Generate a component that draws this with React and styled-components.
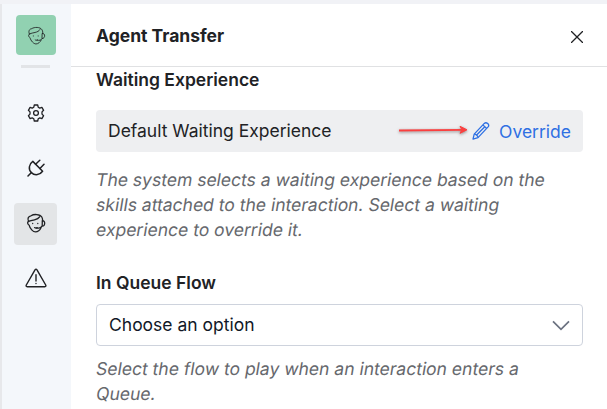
import React from "react";
import styled, { createGlobalStyle } from "styled-components";

const GlobalStyle = createGlobalStyle`
  * { box-sizing: border-box; }
  html, body { margin: 0; padding: 0; overflow: hidden; background: #fff; }
  body { font-family: Inter, "Liberation Sans", sans-serif; color: #212225; }
`;

const Screen = styled.div`
  width: 607px;
  height: 409px;
  overflow: hidden;
  display: flex;
  border-top: 4px solid #f1f2f6;
  background: #fff;
`;

const Rail = styled.nav`
  width: 71px;
  flex: none;
  display: flex;
  flex-direction: column;
  align-items: center;
  padding-top: 11px;
  border-left: 2px solid #e7e8eb;
  background: #f4f7fb;
`;

const Avatar = styled.div`
  width: 40px;
  height: 40px;
  margin-right: 1px;
  border-radius: 4px;
  background: #91d1b1;
  display: flex;
  align-items: center;
  justify-content: center;
`;

const Divider = styled.div`
  width: 29px;
  height: 3px;
  margin: 10px 2px 25px 0;
  background: #e2e4e7;
`;

const RailButton = styled.button`
  width: 43px;
  height: 42px;
  margin: 0 2px 13px 0;
  padding: 0 0 2px 1px;
  border: 0;
  border-radius: 4px;
  color: #202124;
  background: ${(p) => (p.$active ? "#e3e5e7" : "transparent")};
  display: flex;
  align-items: center;
  justify-content: center;
  flex: none;
`;

const Panel = styled.main`
  flex: 1;
  min-width: 0;
`;

const Header = styled.header`
  height: 63px;
  padding: 0 24px 0 25px;
  border-bottom: 1px solid #e0e1e3;
  display: flex;
  align-items: center;
  justify-content: space-between;
`;

const Title = styled.h1`
  margin: 0;
  padding-top: 2px;
  font-size: 17.5px;
  font-weight: 700;
  line-height: 24px;
`;

const CloseButton = styled.button`
  padding: 3px 0 0;
  border: 0;
  background: none;
  color: #202124;
  display: flex;
`;

const Body = styled.div`
  padding: 1px 24px 0 25px;
`;

const Label = styled.h2`
  margin: 0;
  font-size: 17.5px;
  font-weight: 600;
  line-height: 24px;
`;

const ExperienceRow = styled.div`
  height: 42px;
  margin: 18px 0 15px;
  padding: 0 12px;
  border-radius: 4px;
  background: #eeeff1;
  display: flex;
  align-items: center;
  font-size: 17.5px;
`;

const RowName = styled.span`
  flex: 1;
  padding-bottom: 2px;
  white-space: nowrap;
`;

const Pointer = styled.svg`
  flex: none;
  overflow: visible;
  filter: drop-shadow(0 1px 1.5px rgba(60, 40, 40, 0.55));
`;

const Override = styled.button`
  padding: 0;
  margin-left: 4px;
  border: 0;
  background: none;
  font: inherit;
  color: #2e70e3;
  display: flex;
  align-items: center;
  gap: 9px;
`;

const OverrideText = styled.span``;

const Hint = styled.p`
  margin: 0;
  font-size: 17.5px;
  line-height: 25px;
  color: #66686d;
  white-space: nowrap;
`;

/* Slants the upright face so that it keeps its two-storey "a". */
const HintLine = styled.span`
  display: block;
  width: fit-content;
  transform: skewX(-9.4deg);
  transform-origin: 0 60%;
`;

const QueueSection = styled.section`
  margin-top: 29px;
`;

const Select = styled.div`
  height: 42px;
  margin: 9px 0 10px;
  padding: 0 12px;
  border: 1px solid #ced3dd;
  border-radius: 4px;
  display: flex;
  align-items: center;
  justify-content: space-between;
  font-size: 17.5px;
  color: #111827;
`;

const SelectValue = styled.span`
  padding-bottom: 2px;
`;

function AgentIcon({ size, width = 1.3 }) {
  return (
    <svg width={size} height={size} viewBox="0 0 20 20" fill="none" stroke="currentColor" strokeWidth={width} strokeLinecap="round" strokeLinejoin="round">
      <path d="M2.6 8.6C1 5.5 2.6 3 5 2.8C7.6 1 14 .8 15.8 4C16.7 5.6 16.7 7 16.5 8" />
      <path d="M2.8 8.2C4.6 7.4 6.4 7.4 8.5 6.8C11 6.2 12.6 5.4 13.6 3.8" />
      <path d="M2.8 8.4C1 8.6 1.3 11.2 3.2 12.3C4 15.6 7 18.9 9.5 18.9C11.6 18.9 14 17 15 14.8" />
      <path d="M16.3 7.8C19.5 7.2 19.5 13.4 16.2 13.2ZM16 13.2C14.8 15.1 13 15.6 10.6 14.8" />
      <path d="M6.7 10.4V10.6M11.8 10.4V10.6" />
      <path d="M8.6 14.6C9.4 15.3 10.4 15.3 11.2 14.7" />
    </svg>
  );
}

function GearIcon() {
  return (
    <svg width="18" height="18" viewBox="0 0 18 18" fill="none" stroke="currentColor" strokeWidth="1.3" strokeLinejoin="round">
      <path d="M7.3 1H10.7L11.2 3.2L12.8 4.1L14.9 3.4L16.6 6.3L15 7.9V10.1L16.6 11.7L14.9 14.6L12.8 13.9L11.2 14.8L10.7 17H7.3L6.8 14.8L5.2 13.9L3.1 14.6L1.4 11.7L3 10.1V7.9L1.4 6.3L3.1 3.4L5.2 4.1L6.8 3.2Z" />
      <circle cx="9" cy="9" r="2.4" />
    </svg>
  );
}

function PlugIcon() {
  return (
    <svg width="18" height="18" viewBox="0 0 18 18" fill="none" stroke="currentColor" strokeWidth="1.5" strokeLinecap="round" strokeLinejoin="round">
      <path d="M5.8 2.4L15.6 12.3C13 16 7.8 17 4.4 13.6C1 10.3 2 5 5.8 2.4Z" />
      <path d="M4.2 13.8L1 17M8.6 5.2L12.8 1.3M12.9 9.4L17 5.2" />
    </svg>
  );
}

function WarningIcon() {
  return (
    <svg width="22" height="20" viewBox="0 0 22 20" fill="none" stroke="currentColor" strokeWidth="1.4" strokeLinecap="round" strokeLinejoin="round">
      <path d="M10 1.8Q11 .4 12 1.8L20.7 17Q21.4 18.6 19.8 18.7H2.2Q.6 18.6 1.3 17Z" />
      <path d="M11 6.7V13M11 15.4V15.6" />
    </svg>
  );
}

function PencilIcon() {
  return (
    <svg width="18" height="19" viewBox="0 0 18 19" fill="none" stroke="currentColor" strokeWidth="1.3" strokeLinejoin="round">
      <path d="M1 17.1L2.2 12.1L12.3 1.4C14.4 -.3 18 2.5 16.1 4.9L6 15.6Z" />
      <path d="M2.2 12.1C4 12.1 6 13.8 6 15.6M10.9 2.9L14.7 6.5M4.4 13.3L12.8 4.7" />
    </svg>
  );
}

export default function App() {
  return (
    <>
      <GlobalStyle />
      <Screen>
        <Rail>
          <Avatar><AgentIcon size={19} width={0.9} /></Avatar>
          <Divider />
          <RailButton aria-label="Settings"><GearIcon /></RailButton>
          <RailButton aria-label="Integrations"><PlugIcon /></RailButton>
          <RailButton aria-label="Agent transfer" $active><AgentIcon size={20} /></RailButton>
          <RailButton aria-label="Errors"><WarningIcon /></RailButton>
        </Rail>
        <Panel>
          <Header>
            <Title>Agent Transfer</Title>
            <CloseButton aria-label="Close">
              <svg width="12" height="12" viewBox="0 0 12 12" fill="none" stroke="currentColor" strokeWidth="1.3">
                <path d="M0 0L12 12M12 0L0 12" />
              </svg>
            </CloseButton>
          </Header>
          <Body>
            <Label>Waiting Experience</Label>
            <ExperienceRow>
              <RowName>Default Waiting Experience</RowName>
              <Pointer width="69" height="12" viewBox="0 0 69 12" fill="none" stroke="#fb3f3f" strokeWidth="1.8">
                <path d="M0 5.5L66 4.8" />
                <path d="M61 1.3L68 4.8L61 8.3L63 4.8Z" fill="#fb3f3f" strokeWidth="1" />
              </Pointer>
              <Override><PencilIcon /><OverrideText>Override</OverrideText></Override>
            </ExperienceRow>
            <Hint>
              <HintLine>The system selects a waiting experience based on the</HintLine>
              <HintLine>skills attached to the interaction. Select a waiting</HintLine>
              <HintLine>experience to override it.</HintLine>
            </Hint>
            <QueueSection>
              <Label>In Queue Flow</Label>
              <Select>
                <SelectValue>Choose an option</SelectValue>
                <svg width="18" height="11" viewBox="0 0 18 11" fill="none" stroke="#6b7280" strokeWidth="1.7">
                  <path d="M1 1.3L9 9.3L17 1.3" />
                </svg>
              </Select>
              <Hint>
                <HintLine>Select the flow to play when an interaction enters a</HintLine>
                <HintLine>Queue.</HintLine>
              </Hint>
            </QueueSection>
          </Body>
        </Panel>
      </Screen>
    </>
  );
}
